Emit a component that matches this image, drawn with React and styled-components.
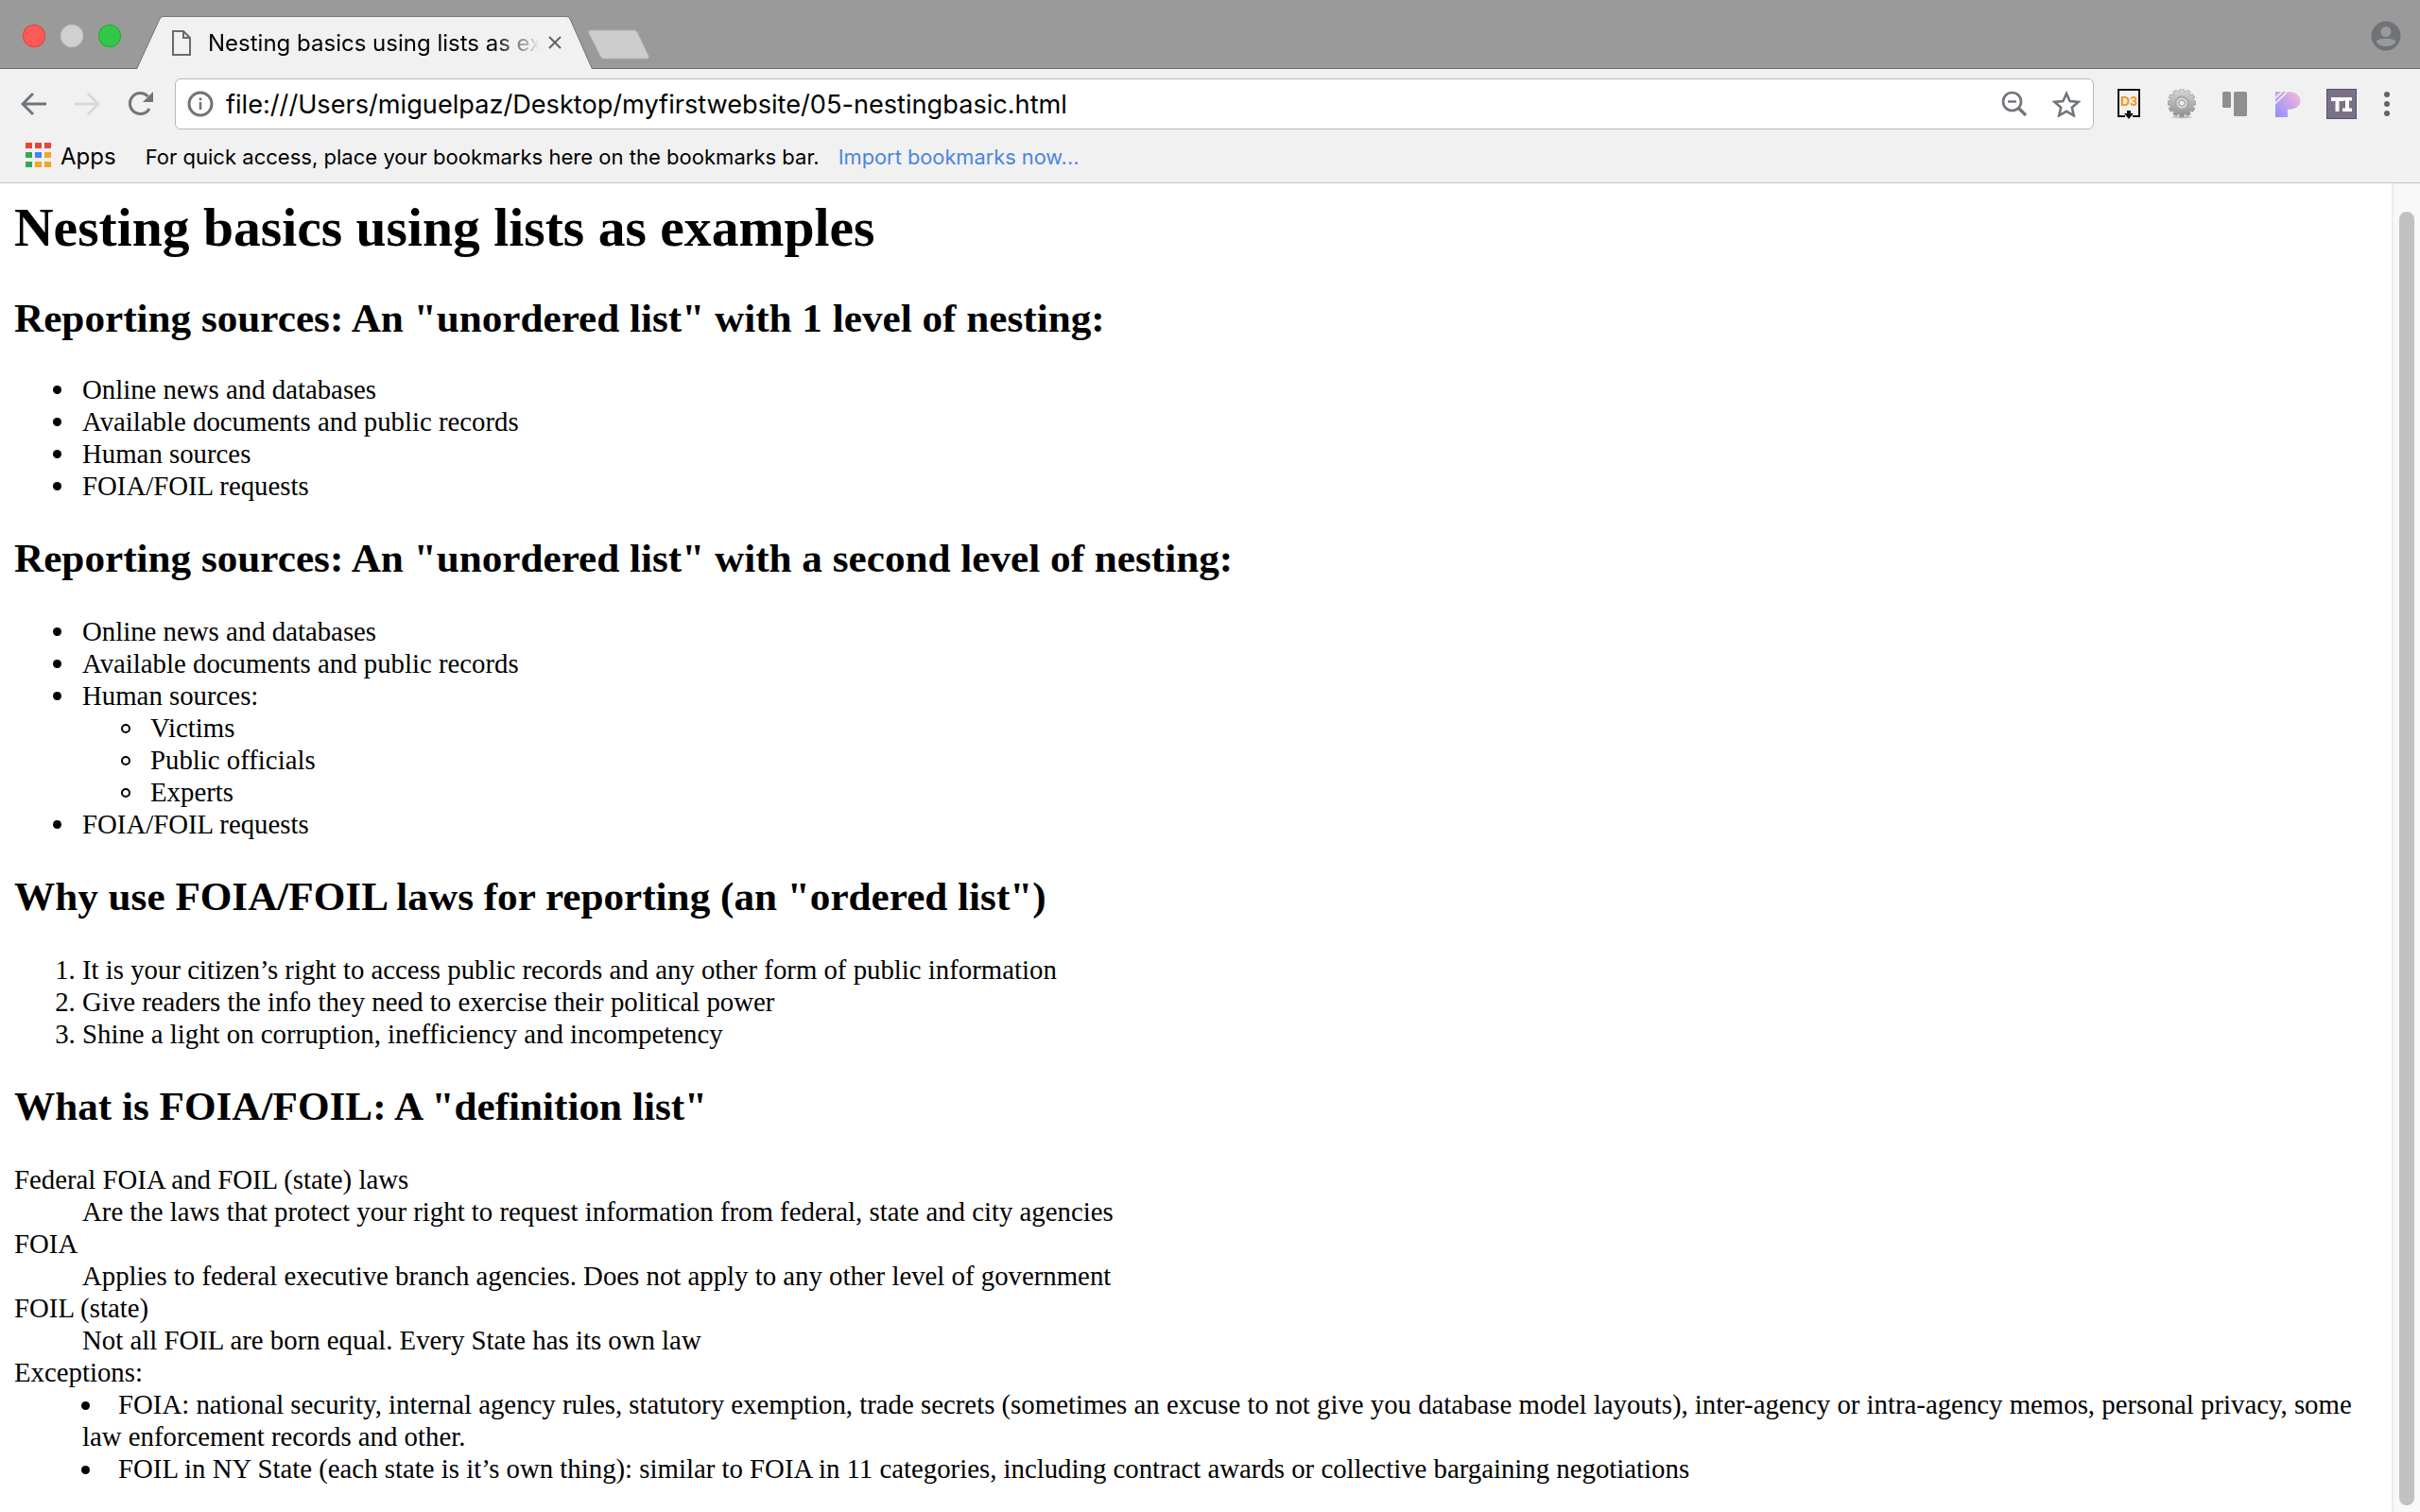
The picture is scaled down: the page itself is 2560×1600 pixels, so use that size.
import React from "react";
import styled, { createGlobalStyle } from "styled-components";

const Global = createGlobalStyle`
  html, body { margin: 0; padding: 0; background: #fff; }
  body { width: 2560px; height: 1600px; overflow: hidden; }
`;
const Win = styled.div`display:flex;flex-direction:column;width:2560px;height:1600px;overflow:hidden;font-family:Inter,"Liberation Sans",sans-serif;color:#000;`;
const TabStrip = styled.div`display:flex;align-items:flex-end;height:73px;background:#9a9a9a;box-shadow:inset 0 -1px 0 #6f6f6f;flex:none;`;
const Lights = styled.div`display:flex;gap:16px;padding:0 0 23px 24px;width:120px;box-sizing:border-box;flex:none;`;
const Light = styled.span`width:24px;height:24px;border-radius:50%;background:${p=>p.$c};box-shadow:inset 0 0 0 1px ${p=>p.$b};flex:none;`;
const Tab = styled.div`position:relative;display:flex;align-items:center;width:483px;height:56px;flex:none;margin-left:24px;padding:0 0 0 38px;box-sizing:border-box;`;
const TabBg = styled.svg`position:absolute;left:0;top:0;width:483px;height:57px;`;
const TabIcon = styled.svg`position:relative;width:20px;height:27px;flex:none;`;
const TabTitle = styled.span`position:relative;margin:2px 0 0 18px;width:351px;height:32px;line-height:32px;overflow:hidden;white-space:nowrap;font-size:24px;-webkit-mask-image:linear-gradient(90deg,#000 86%,transparent 100%);mask-image:linear-gradient(90deg,#000 86%,transparent 100%);`;
const TabClose = styled.svg`position:relative;margin-left:8px;width:16px;height:16px;flex:none;`;
const NewTab = styled.svg`width:66px;height:32px;margin:0 0 10px -5px;flex:none;`;
const StripSpacer = styled.div`flex:1;`;
const Avatar = styled.svg`width:32px;height:32px;margin:0 20px 19px 0;flex:none;`;

const Toolbar = styled.div`display:flex;align-items:center;height:74px;background:#f1f1f1;flex:none;`;
const NavIcon = styled.svg`flex:none;width:${p=>p.$w}px;height:${p=>p.$h}px;margin-left:${p=>p.$ml}px;`;
const Omni = styled.div`display:flex;align-items:center;flex:none;margin-left:22px;width:2030px;height:54px;box-sizing:border-box;background:#fff;border:1px solid #b8b8b8;border-radius:6px;padding:0 13px 0 12px;`;
const OmniIcon = styled.svg`flex:none;margin-left:${p=>p.$ml||0}px;`;
const Url = styled.span`margin-left:13px;font-size:27.15px;flex:1;white-space:nowrap;`;
const Ext = styled.svg`flex:none;width:${p=>p.$w}px;height:${p=>p.$h}px;margin-left:${p=>p.$ml}px;`;
const Bookmarks = styled.div`display:flex;align-items:center;height:47px;background:#f1f1f1;padding:0 0 9px 27px;box-sizing:border-box;flex:none;border-bottom:1px solid #c2c2c2;font-size:24px;`;
const AppsGrid = styled.div`display:grid;grid-template-columns:repeat(3,7px);grid-auto-rows:6px;gap:4px 3px;flex:none;margin-bottom:3px;`;
const AppDot = styled.span`background:${p=>p.$c};`;
const AppsLabel = styled.span`margin-left:10px;`;
const Hint = styled.span`margin-left:31px;font-size:22.05px;white-space:nowrap;`;
const ImportLink = styled.span`margin-left:20px;font-size:21.8px;color:#4a86e0;white-space:nowrap;`;
const Main = styled.div`display:flex;flex:1;min-height:0;background:#fff;`;
const Page = styled.div`flex:1;min-width:0;overflow:hidden;padding:0 15px;font-family:"Liberation Serif","Times New Roman",serif;font-size:28.8px;line-height:34px;color:#000;`;
const H1 = styled.h1`font-size:57.6px;line-height:68px;margin:13px 0 37px;font-weight:700;`;
const H2 = styled.h2`font-size:43.2px;line-height:50px;margin:35px 0 ${p=>p.$tight?32.5:35}px;font-weight:700;`;
const List = styled.ul`margin:0;padding-left:72px;list-style:none;`;
const Item = styled.li`
  position:relative;
  &::before{content:"";position:absolute;left:-31px;top:13px;box-sizing:border-box;width:${p=>p.$circle?10:9}px;height:${p=>p.$circle?10:9}px;border-radius:50%;
    ${p=>p.$circle?"border:2px solid #000;":"background:#000;"}}
`;
const Numbered = styled.ol`margin:0;padding-left:72px;`;
const Defs = styled.dl`margin:0;`;
const Term = styled.dt``;
const Def = styled.dd`margin-left:72px;`;
const InsideList = styled.ul`margin:0;padding:0;list-style:none;`;
const InsideItem = styled.li`
  &::before{content:"";display:inline-block;width:9px;height:9px;border-radius:50%;background:#000;margin:0 30px 3px -1px;vertical-align:middle;}
`;
const Scrollbar = styled.div`width:30px;flex:none;background:#f8f8f8;border-left:2px solid #ececec;box-sizing:border-box;padding:30px 6px 7px 6px;`;
const Thumb = styled.div`height:100%;width:16px;border-radius:8px;background:#c1c1c1;`;

const apps = ["#ea4335","#ea4335","#ea4335","#34a853","#4285f4","#f5a623","#34a853","#f5a623","#f5a623"];

const gearPath = (() => {
  const pts = [];
  const n = 12;
  for (let i = 0; i < n; i++) {
    const a = (i / n) * Math.PI * 2;
    const w = Math.PI / n;
    [[a - w * 0.95, 12], [a - w * 0.5, 15], [a + w * 0.5, 15], [a + w * 0.95, 12]].forEach(([t, r]) => {
      pts.push(`${(15 + r * Math.cos(t)).toFixed(2)} ${(15 + r * Math.sin(t)).toFixed(2)}`);
    });
  }
  return `M${pts.join(" L")} Z`;
})();

export default function App() {
  return (
    <Win>
      <Global />
      <TabStrip>
        <Lights>
          <Light $c="#fc5b57" $b="#e0443e" />
          <Light $c="#d0d0d0" $b="#c4c4c4" />
          <Light $c="#33c748" $b="#27aa35" />
        </Lights>
        <Tab>
          <TabBg viewBox="0 0 483 57">
            <path d="M0.5 57 L25 3 Q26 0.5 29 0.5 L455 0.5 Q458 0.5 459 3 L482.5 57 Z" fill="#f1f1f1" />
            <path d="M0.5 56 L25 3 Q26 0.5 29 0.5 L455 0.5 Q458 0.5 459 3 L482.5 56" fill="none" stroke="#777" strokeWidth="1" />
          </TabBg>
          <TabIcon viewBox="0 0 20 27">
            <path d="M1 1 H12 L19 8 V26 H1 Z M12 1 V8 H19" fill="none" stroke="#6a6a6a" strokeWidth="2" />
          </TabIcon>
          <TabTitle>Nesting basics using lists as examples</TabTitle>
          <TabClose viewBox="0 0 16 16">
            <path d="M2 2 L14 14 M14 2 L2 14" stroke="#5f6368" strokeWidth="2" />
          </TabClose>
        </Tab>
        <NewTab viewBox="0 0 66 32">
          <path d="M3 1 H49 Q51 1 52 3 L64 28 Q65 31 62 31 H17 Q14 31 13 28 L1 4 Q0 1 3 1 Z" fill="#cdcdcd" stroke="#b4b4b4" />
        </NewTab>
        <StripSpacer />
        <Avatar viewBox="0 0 32 32">
          <circle cx="16" cy="16" r="15.5" fill="#6f7377" />
          <circle cx="16" cy="11.5" r="5.5" fill="#9a9a9a" />
          <path d="M5.5 22 C8 17.5 24 17.5 26.5 22 C24 26 20 27 16 27 C12 27 8 26 5.5 22 Z" fill="#9a9a9a" />
        </Avatar>
      </TabStrip>
      <Toolbar>
        <NavIcon $w={28} $h={26} $ml={22} viewBox="0 0 28 26">
          <path d="M27 13 H3 M13 2 L2 13 L13 24" fill="none" stroke="#70757a" strokeWidth="3" />
        </NavIcon>
        <NavIcon $w={28} $h={26} $ml={28} viewBox="0 0 28 26">
          <path d="M1 13 H25 M15 2 L26 13 L15 24" fill="none" stroke="#d9d9d9" strokeWidth="3" />
        </NavIcon>
        <NavIcon $w={28} $h={28} $ml={29} viewBox="0 0 28 28">
          <path d="M23 19 A11 11 0 1 1 21.5 6" fill="none" stroke="#70757a" strokeWidth="3" />
          <path d="M27 1 V12 H16 Z" fill="#70757a" />
        </NavIcon>
        <Omni>
          <OmniIcon width="28" height="28" viewBox="0 0 28 28">
            <circle cx="14" cy="14" r="12" fill="none" stroke="#70757a" strokeWidth="3" />
            <rect x="12.7" y="12" width="2.6" height="8" fill="#70757a" />
            <rect x="12.7" y="7.5" width="2.6" height="2.8" fill="#70757a" />
          </OmniIcon>
          <Url>file:///Users/miguelpaz/Desktop/myfirstwebsite/05-nestingbasic.html</Url>
          <OmniIcon width="28" height="28" viewBox="0 0 28 28">
            <circle cx="11.5" cy="11.5" r="9.5" fill="none" stroke="#70757a" strokeWidth="2.6" />
            <path d="M18 18 L26 26" stroke="#70757a" strokeWidth="3.2" />
            <path d="M7 11.5 H16" stroke="#70757a" strokeWidth="2.4" />
          </OmniIcon>
          <OmniIcon $ml={26} width="30" height="28" viewBox="0 0 30 28">
            <path d="M15 3 L18.6 11 L27.5 11.9 L20.8 17.8 L22.8 26.3 L15 21.8 L7.2 26.3 L9.2 17.8 L2.5 11.9 L11.4 11 Z" fill="none" stroke="#70757a" strokeWidth="2.6" />
          </OmniIcon>
        </Omni>
        <Ext $w={24} $h={32} $ml={25} viewBox="0 0 24 32">
          <path d="M8 29 H1 V1 H23 V29 H16" fill="none" stroke="#111" strokeWidth="2" />
          <text x="12" y="17.5" textAnchor="middle" fontFamily="Liberation Sans" fontWeight="700" fontSize="14" fill="#f7941e">D3</text>
          <path d="M10 23 H14 V26 H17 L12 32 L7 26 H10 Z" fill="#111" />
        </Ext>
        <Ext $w={30} $h={32} $ml={29} viewBox="0 0 30 32">
          <defs>
            <linearGradient id="gear" x1="0" y1="0" x2="0" y2="1">
              <stop offset="0" stopColor="#d8d8d8" />
              <stop offset="1" stopColor="#8e8e8e" />
            </linearGradient>
          </defs>
          <ellipse cx="15" cy="30" rx="11" ry="1.5" fill="#c4c4c4" />
          <path d={gearPath} fill="url(#gear)" stroke="#9a9a9a" strokeWidth="0.7" />
          <circle cx="15" cy="15" r="7.5" fill="#a8a8a8" />
          <circle cx="15" cy="15" r="5.5" fill="#dcdcdc" />
          <circle cx="15" cy="15" r="3.2" fill="#efefef" stroke="#8a8a8a" strokeWidth="1" />
        </Ext>
        <Ext $w={26} $h={26} $ml={28} viewBox="0 0 26 26">
          <rect x="0" y="0" width="9" height="17" rx="1.5" fill="#8f8f8f" />
          <rect x="12" y="0" width="14" height="26" rx="1.5" fill="#8f8f8f" />
        </Ext>
        <Ext $w={27} $h={27} $ml={30} viewBox="0 0 27 27">
          <defs>
            <linearGradient id="pk" x1="0" y1="1" x2="1" y2="0">
              <stop offset="0" stopColor="#8f8cff" />
              <stop offset="1" stopColor="#fbbcd8" />
            </linearGradient>
          </defs>
          <path d="M0 27 V0 H14 A12.5 9.5 0 0 1 14 19 H13 V27 Z" fill="url(#pk)" />
          <path d="M0 7 L7 0 M0 12.5 L12.5 0" stroke="#f1f1f1" strokeWidth="1.6" />
        </Ext>
        <Ext $w={32} $h={32} $ml={27} viewBox="0 0 32 32">
          <rect x="0.5" y="0.5" width="31" height="31" fill="#7a7189" stroke="#57515f" />
          <path d="M5 9 H18 V13 H13.5 V24 H9.5 V13 H5 Z M17 9 H27 V12.5 H24 V20.5 H27 V24 H17 V20.5 H20 V12.5 H17 Z" fill="#fff" />
        </Ext>
        <Ext $w={6} $h={26} $ml={29} viewBox="0 0 6 26">
          <circle cx="3" cy="3" r="3" fill="#5f6368" />
          <circle cx="3" cy="13" r="3" fill="#5f6368" />
          <circle cx="3" cy="23" r="3" fill="#5f6368" />
        </Ext>
      </Toolbar>
      <Bookmarks>
        <AppsGrid>{apps.map((c, i) => <AppDot key={i} $c={c} />)}</AppsGrid>
        <AppsLabel>Apps</AppsLabel>
        <Hint>For quick access, place your bookmarks here on the bookmarks bar.</Hint>
        <ImportLink>Import bookmarks now...</ImportLink>
      </Bookmarks>
      <Main>
        <Page>
          <H1>Nesting basics using lists as examples</H1>
          <H2 $tight>Reporting sources: An "unordered list" with 1 level of nesting:</H2>
          <List>
            <Item>Online news and databases</Item>
            <Item>Available documents and public records</Item>
            <Item>Human sources</Item>
            <Item>FOIA/FOIL requests</Item>
          </List>
          <H2>Reporting sources: An "unordered list" with a second level of nesting:</H2>
          <List>
            <Item>Online news and databases</Item>
            <Item>Available documents and public records</Item>
            <Item>Human sources:
              <List>
                <Item $circle>Victims</Item>
                <Item $circle>Public officials</Item>
                <Item $circle>Experts</Item>
              </List>
            </Item>
            <Item>FOIA/FOIL requests</Item>
          </List>
          <H2>Why use FOIA/FOIL laws for reporting (an "ordered list")</H2>
          <Numbered>
            <li>It is your citizen’s right to access public records and any other form of public information</li>
            <li>Give readers the info they need to exercise their political power</li>
            <li>Shine a light on corruption, inefficiency and incompetency</li>
          </Numbered>
          <H2>What is FOIA/FOIL: A "definition list"</H2>
          <Defs>
            <Term>Federal FOIA and FOIL (state) laws</Term>
            <Def>Are the laws that protect your right to request information from federal, state and city agencies</Def>
            <Term>FOIA</Term>
            <Def>Applies to federal executive branch agencies. Does not apply to any other level of government</Def>
            <Term>FOIL (state)</Term>
            <Def>Not all FOIL are born equal. Every State has its own law</Def>
            <Term>Exceptions:</Term>
            <Def>
              <InsideList>
                <InsideItem>FOIA: national security, internal agency rules, statutory exemption, trade secrets (sometimes an excuse to not give you database model layouts), inter-agency or intra-agency memos, personal privacy, some law enforcement records and other.</InsideItem>
                <InsideItem>FOIL in NY State (each state is it’s own thing): similar to FOIA in 11 categories, including contract awards or collective bargaining negotiations</InsideItem>
              </InsideList>
            </Def>
          </Defs>
        </Page>
        <Scrollbar><Thumb /></Scrollbar>
      </Main>
    </Win>
  );
}
